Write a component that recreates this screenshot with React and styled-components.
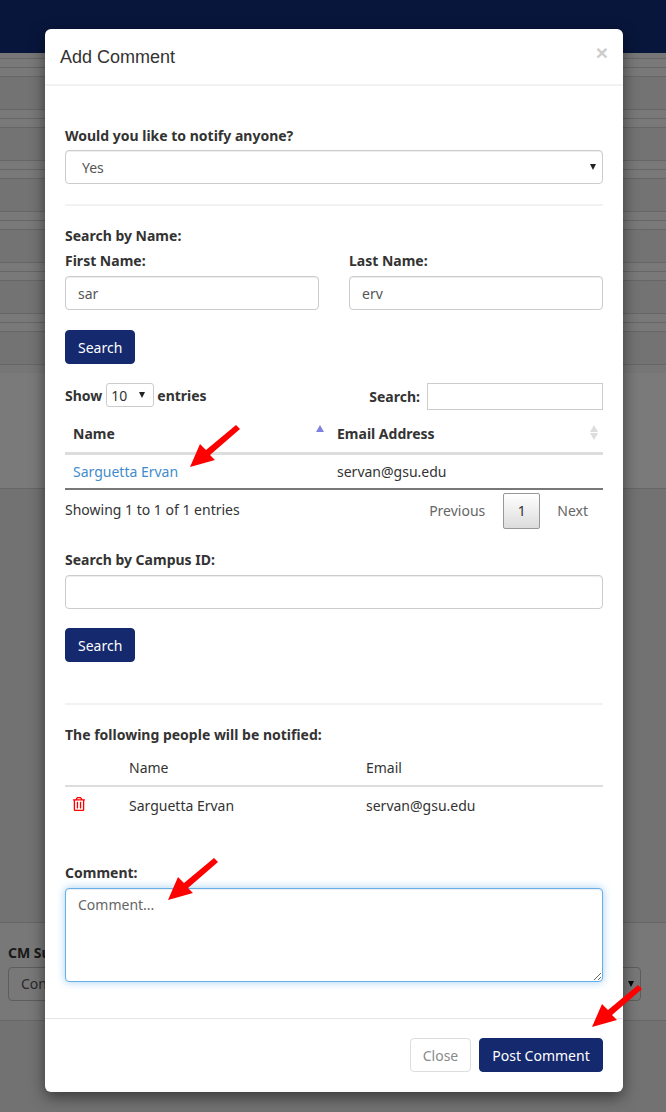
import React from "react";
import styled, { createGlobalStyle } from "styled-components";
import { FaRegTrashAlt } from "react-icons/fa";

const arrowIcon = `url("data:image/svg+xml,%3Csvg xmlns='http://www.w3.org/2000/svg' width='6' height='6'%3E%3Cpath d='M0 0H6L3 6Z' fill='%23222'/%3E%3C/svg%3E")`;

const Global = createGlobalStyle`
  html, body { margin: 0; padding: 0; height: 1112px; overflow: hidden; background: #f4f4f4; }
  body { font-family: "Noto Sans", "Open Sans", sans-serif; font-size: 14px; color: #333; }
  * { box-sizing: border-box; }
`;

const Page = styled.div`
  position: relative;
  width: 666px;
  height: 1112px;
  overflow: hidden;
  display: flex;
  flex-direction: column;
`;
const TopBar = styled.header`
  height: 53px;
  background: #102c78;
  flex: none;
`;
const TopStrip = styled.div`
  height: 6px;
  background: #eee;
  border-bottom: 1px solid #ccc;
  flex: none;
`;
const BgGroup = styled.div`
  flex: none;
  height: 51px;
  display: flex;
  flex-direction: column;
`;
const BgLine = styled.div`
  height: 9px;
  background: #f2f2f2;
  border-bottom: 1px solid #ccc;
`;
const BgBlock = styled.div`
  height: 33px;
  background: #e6e6e6;
  border-bottom: 1px solid #ccc;
`;
const BgPanel = styled.div`
  flex: none;
  height: 124px;
  background: #f4f4f4;
  border-top: 8px solid #ededed;
  border-bottom: 1px solid #ccc;
`;
const BgPlain = styled.div`
  flex: none;
  height: 434px;
  background: #e4e4e4;
  border-bottom: 1px solid #ccc;
`;
const BgForm = styled.div`
  flex: none;
  height: 98px;
  background: #f0f0f0;
  border-bottom: 1px solid #ccc;
  padding: 20px 8px 0;
`;
const BgLabel = styled.div`
  font-weight: 700;
  font-size: 14px;
  line-height: 20px;
`;
const BgSelect = styled.div`
  margin-top: 4px;
  height: 34px;
  width: 633px;
  border: 1px solid #bbb;
  border-radius: 4px;
  padding: 0 12px;
  line-height: 32px;
  color: #555;
  position: relative;
  &::after {
    content: "";
    position: absolute;
    right: 6px;
    top: 13px;
    border: 3px solid transparent;
    border-top: 6px solid #111;
    border-bottom: 0;
  }
`;
const BgRest = styled.div`
  flex: 1;
  background: #e4e4e4;
`;
const Backdrop = styled.div`
  position: absolute;
  inset: 0;
  background: rgba(0, 0, 0, 0.5);
`;
const Modal = styled.section`
  position: absolute;
  left: 45px;
  top: 29px;
  width: 578px;
  height: 1063px;
  background: #fff;
  border-radius: 6px;
  box-shadow: 0 5px 15px rgba(0, 0, 0, 0.5);
  display: flex;
  flex-direction: column;
`;
const ModalHeader = styled.div`
  height: 57px;
  flex: none;
  border-bottom: 2px solid #f2f2f2;
  padding: 15px;
  display: flex;
  justify-content: space-between;
`;
const Title = styled.h4`
  margin: 1px 0 0;
  font: 400 18px/25px "Liberation Sans", Arial, sans-serif;
  color: #333;
`;
const CloseX = styled.span`
  font: 700 21px/21px "Liberation Sans", Arial, sans-serif;
  color: #ccc;
  margin-top: -2px;
`;
const ModalBody = styled.div`
  flex: 1;
  padding: 0 20px;
`;
const Label = styled.div`
  font-weight: 700;
  line-height: 20px;
  margin-top: ${(p) => p.$top || 0}px;
`;
const Select = styled.select`
  display: block;
  width: 100%;
  height: 34px;
  margin-top: 4px;
  padding: 1px 16px 0;
  font: 14px "Noto Sans", sans-serif;
  color: #555;
  appearance: none;
  background: #fff ${arrowIcon} no-repeat right 6px center;
  border: 1px solid #ccc;
  border-radius: 4px;
  box-shadow: inset 0 1px 1px rgba(0, 0, 0, 0.075);
`;
const Rule = styled.hr`
  margin: ${(p) => p.$top}px 0 0;
  border: 0;
  border-top: 2px solid #f2f2f2;
`;
const TwoCols = styled.div`
  display: grid;
  grid-template-columns: 254px 254px;
  column-gap: 30px;
`;
const TextInput = styled.input`
  display: block;
  width: 100%;
  height: 34px;
  margin-top: 5px;
  padding: 0 12px;
  font: 14px "Noto Sans", sans-serif;
  color: #555;
  background: #fff;
  border: 1px solid #ccc;
  border-radius: 4px;
  box-shadow: inset 0 1px 1px rgba(0, 0, 0, 0.075);
`;
const PrimaryButton = styled.button`
  display: block;
  height: 34px;
  margin-top: ${(p) => p.$top || 0}px;
  padding: 0 12px;
  font: 14px "Noto Sans", sans-serif;
  color: #fff;
  background: #14296e;
  border: 1px solid #14296e;
  border-radius: 4px;
`;
const TableTools = styled.div`
  display: flex;
  justify-content: space-between;
  align-items: flex-start;
  margin-top: 18px;
`;
const ShowLabel = styled.div`
  display: flex;
  align-items: center;
  gap: 4px;
  font-weight: 700;
  height: 26px;
`;
const SmallSelect = styled.select`
  width: 48px;
  height: 24px;
  margin-right: -1px;
  padding: 0 0 0 4px;
  font: 14px "Noto Sans", sans-serif;
  color: #333;
  appearance: none;
  background: #fff ${arrowIcon} no-repeat right 8px center;
  border: 1px solid #ccc;
  border-radius: 3px;
`;
const SearchLabel = styled.div`
  display: flex;
  align-items: center;
  gap: 7px;
  font-weight: 700;
  height: 28px;
`;
const SmallInput = styled.input`
  width: 176px;
  height: 27px;
  background: #fff;
  border: 1px solid #ccc;
`;
const ResultTable = styled.table`
  width: 100%;
  margin-top: 5px;
  border-collapse: collapse;
  table-layout: fixed;
  border-bottom: 2px solid #777;
`;
const HeadCell = styled.th`
  position: relative;
  height: 38px;
  padding: 0 8px;
  text-align: left;
  font-weight: 700;
  border-bottom: 3px solid #ddd;
`;
const BodyCell = styled.td`
  height: 36px;
  padding: 0 8px;
`;
const NameLink = styled.a`
  color: #428bca;
`;
const SortUp = styled.i`
  position: absolute;
  right: ${(p) => p.$right}px;
  top: ${(p) => p.$top}px;
  border: 4.5px solid transparent;
  border-top: 0;
  border-bottom: 7px solid ${(p) => p.$color};
`;
const SortDown = styled.i`
  position: absolute;
  right: ${(p) => p.$right}px;
  top: ${(p) => p.$top}px;
  border: 4.5px solid transparent;
  border-bottom: 0;
  border-top: 7px solid ${(p) => p.$color};
`;
const TableFooter = styled.div`
  display: flex;
  justify-content: space-between;
  align-items: flex-start;
  margin-top: 3px;
`;
const Info = styled.div`
  margin-top: 7px;
  line-height: 20px;
`;
const Pager = styled.div`
  display: flex;
  align-items: center;
  color: #666;
`;
const PageLink = styled.span`
  padding: 0 ${(p) => p.$right}px 0 ${(p) => p.$left}px;
  line-height: 36px;
`;
const PageCurrent = styled.span`
  width: 37px;
  height: 36px;
  text-align: center;
  line-height: 34px;
  color: #333;
  border: 1px solid #979797;
  border-radius: 2px;
  background: linear-gradient(#fff, #dcdcdc);
`;
const NotifyTable = styled.table`
  width: 100%;
  margin-top: 12px;
  border-collapse: collapse;
  table-layout: fixed;
`;
const NotifyHead = styled.th`
  height: 29px;
  padding: 0 0 8px;
  text-align: left;
  font-weight: 400;
  border-bottom: 2px solid #ddd;
`;
const NotifyCell = styled.td`
  height: 37px;
  padding: 0;
`;
const TrashWrap = styled.span`
  display: inline-flex;
  margin-left: 7px;
  color: #f00;
  font-size: 14px;
`;
const CommentBox = styled.textarea`
  display: block;
  width: 100%;
  height: 94px;
  margin-top: 5px;
  padding: 6px 12px;
  font: 14px/20px "Noto Sans", sans-serif;
  color: #555;
  border: 1px solid #66afe9;
  border-radius: 4px;
  outline: 0;
  box-shadow: inset 0 1px 1px rgba(0, 0, 0, 0.075), 0 0 8px rgba(102, 175, 233, 0.6);
  &::placeholder { color: #666; opacity: 1; }
`;
const ModalFooter = styled.div`
  height: 74px;
  flex: none;
  border-top: 1px solid #e5e5e5;
  padding: 19px 20px 0;
  display: flex;
  justify-content: flex-end;
  gap: 8px;
`;
const GhostButton = styled.button`
  width: 61px;
  height: 34px;
  padding: 0;
  font: 14px "Noto Sans", sans-serif;
  color: #8a8a8a;
  background: #fff;
  border: 1px solid #ddd;
  border-radius: 4px;
`;
const FooterPrimary = styled(PrimaryButton)`
  width: 124px;
  margin: 0;
  padding: 0;
`;
const ArrowLayer = styled.svg`
  position: absolute;
  left: 0;
  top: 0;
  width: 666px;
  height: 1112px;
  pointer-events: none;
`;

const Arrow = ({ x, y }) => (
  <g transform={`translate(${x} ${y})`}>
    <path d="M0 0 L10 -23 L16 -17 L46 -42 L50 -38 L20 -12 L25 -7 Z" fill="#f00" />
  </g>
);

export default function App() {
  return (
    <>
      <Global />
      <Page>
        <TopBar />
        <TopStrip />
        {[0, 1, 2, 3, 4, 5].map((i) => (
          <BgGroup key={i}>
            <BgLine />
            <BgLine />
            <BgBlock />
          </BgGroup>
        ))}
        <BgPanel />
        <BgPlain />
        <BgForm>
          <BgLabel>CM Supervisor:</BgLabel>
          <BgSelect>Contact</BgSelect>
        </BgForm>
        <BgRest />
        <Backdrop />
        <Modal>
          <ModalHeader>
            <Title>Add Comment</Title>
            <CloseX>×</CloseX>
          </ModalHeader>
          <ModalBody>
            <Label $top={40}>Would you like to notify anyone?</Label>
            <Select defaultValue="Yes">
              <option>Yes</option>
              <option>No</option>
            </Select>
            <Rule $top={20} />
            <Label $top={20}>Search by Name:</Label>
            <TwoCols>
              <div>
                <Label $top={5}>First Name:</Label>
                <TextInput defaultValue="sar" />
              </div>
              <div>
                <Label $top={5}>Last Name:</Label>
                <TextInput defaultValue="erv" />
              </div>
            </TwoCols>
            <PrimaryButton $top={20}>Search</PrimaryButton>
            <TableTools>
              <ShowLabel>
                Show
                <SmallSelect defaultValue="10">
                  <option>10</option>
                  <option>25</option>
                </SmallSelect>
                entries
              </ShowLabel>
              <SearchLabel>
                Search:
                <SmallInput />
              </SearchLabel>
            </TableTools>
            <ResultTable>
              <colgroup>
                <col width="264" />
                <col />
              </colgroup>
              <thead>
                <tr>
                  <HeadCell>
                    Name
                    <SortUp $right={5} $top={10} $color="#8080e0" />
                  </HeadCell>
                  <HeadCell>
                    Email Address
                    <SortUp $right={5} $top={10} $color="#ddd" />
                    <SortDown $right={5} $top={18} $color="#ddd" />
                  </HeadCell>
                </tr>
              </thead>
              <tbody>
                <tr>
                  <BodyCell>
                    <NameLink>Sarguetta Ervan</NameLink>
                  </BodyCell>
                  <BodyCell>servan@gsu.edu</BodyCell>
                </tr>
              </tbody>
            </ResultTable>
            <TableFooter>
              <Info>Showing 1 to 1 of 1 entries</Info>
              <Pager>
                <PageLink $left={17} $right={18}>Previous</PageLink>
                <PageCurrent>1</PageCurrent>
                <PageLink $left={17} $right={15}>Next</PageLink>
              </Pager>
            </TableFooter>
            <Label $top={21}>Search by Campus ID:</Label>
            <TextInput />
            <PrimaryButton $top={19}>Search</PrimaryButton>
            <Rule $top={41} />
            <Label $top={20}>The following people will be notified:</Label>
            <NotifyTable>
              <colgroup>
                <col width="64" />
                <col width="237" />
                <col />
              </colgroup>
              <thead>
                <tr>
                  <NotifyHead />
                  <NotifyHead>Name</NotifyHead>
                  <NotifyHead>Email</NotifyHead>
                </tr>
              </thead>
              <tbody>
                <tr>
                  <NotifyCell>
                    <TrashWrap>
                      <FaRegTrashAlt />
                    </TrashWrap>
                  </NotifyCell>
                  <NotifyCell>Sarguetta Ervan</NotifyCell>
                  <NotifyCell>servan@gsu.edu</NotifyCell>
                </tr>
              </tbody>
            </NotifyTable>
            <Label $top={40}>Comment:</Label>
            <CommentBox placeholder="Comment..." />
          </ModalBody>
          <ModalFooter>
            <GhostButton>Close</GhostButton>
            <FooterPrimary>Post Comment</FooterPrimary>
          </ModalFooter>
        </Modal>
        <ArrowLayer viewBox="0 0 666 1112">
          <Arrow x={190} y={467} />
          <Arrow x={168} y={900} />
          <Arrow x={592} y={1027} />
        </ArrowLayer>
      </Page>
    </>
  );
}
